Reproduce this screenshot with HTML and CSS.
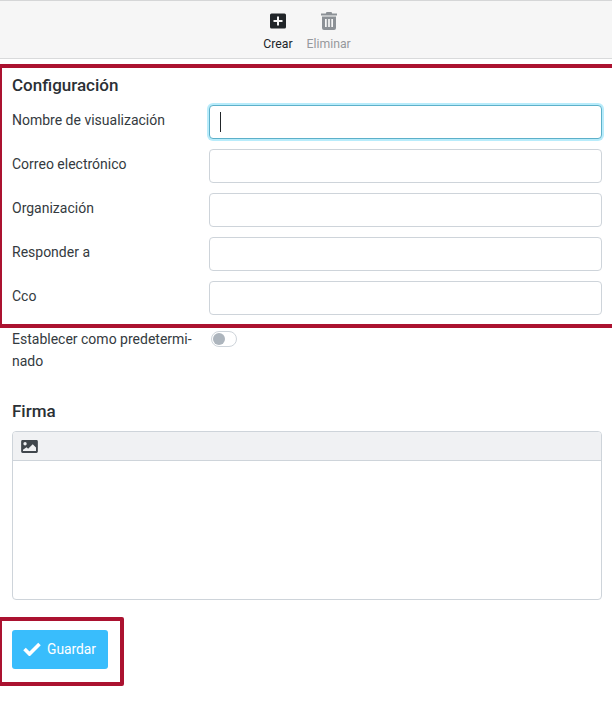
FILE: index.html
```html
<!DOCTYPE html>
<html lang="es">
<head>
    <meta charset="UTF-8">
    <meta name="viewport" content="width=device-width, initial-scale=1.0">
    <title>Configuración</title>
    <link rel="stylesheet" href="styles.css">
</head>
<body>

<div class="toolbar">
    <button class="tool-btn">
        <svg class="tool-icon" viewBox="0 0 16 18"><path fill="#212529" fill-rule="evenodd" d="M1.500 1.500h13A1.500 1.500 0 0 1 16 3v12a1.500 1.500 0 0 1-1.500 1.500h-13A1.500 1.500 0 0 1 0 15V3a1.500 1.500 0 0 1 1.500-1.500zM7 4.500V8H3.500v2H7v3.500h2V10h3.500V8H9V4.500z"/></svg>
        <span>Crear</span>
    </button>
    <button class="tool-btn disabled">
        <svg class="tool-icon" viewBox="0 0 16 18"><path fill="#8c9196" fill-rule="evenodd" d="M5.500 0h5l.7 1.500H16v2H0v-2h4.800zM1 4.500h14V16a2 2 0 0 1-2 2H3a2 2 0 0 1-2-2zM4 7v8h1.700V7zm3.150 0v8h1.700V7zM10.300 7v8H12V7z"/></svg>
        <span>Eliminar</span>
    </button>
</div>

<div class="form">
    <h2 class="title-first">Configuración</h2>

    <div class="row">
        <label>Nombre de visualización</label>
        <div class="fake-input focused"><span class="caret"></span></div>
    </div>
    <div class="row">
        <label>Correo electrónico</label>
        <div class="fake-input"></div>
    </div>
    <div class="row">
        <label>Organización</label>
        <div class="fake-input"></div>
    </div>
    <div class="row">
        <label>Responder a</label>
        <div class="fake-input"></div>
    </div>
    <div class="row">
        <label>Cco</label>
        <div class="fake-input"></div>
    </div>

    <div class="row-toggle">
        <label>Establecer como predetermi-<br>nado</label>
        <div class="switch"><span class="knob"></span></div>
    </div>

    <h2 class="title-firma">Firma</h2>
    <div class="editor">
        <div class="editor-bar">
            <svg class="image-icon" viewBox="0 0 18 14"><path fill="#40464c" fill-rule="evenodd" d="M1.500 0h15A1.500 1.500 0 0 1 18 1.500v11a1.500 1.500 0 0 1-1.500 1.500h-15A1.500 1.500 0 0 1 0 12.500v-11A1.500 1.500 0 0 1 1.500 0zM4.200 2.200a1.800 1.800 0 1 0 0 3.600 1.800 1.800 0 0 0 0-3.600zM2 11.800h14V8l-3.500-3.500L7.500 9.500 5.800 7.800 2 10.500z"/></svg>
        </div>
        <div class="editor-body"></div>
    </div>

    <button class="save-btn">
        <svg class="check-icon" viewBox="0 0 18 14"><path fill="none" stroke="#fff" stroke-width="3.600" d="M1.500 7l5 5L16.500 2"/></svg>
        Guardar
    </button>
</div>

<!-- recuadros rojos de la captura -->
<div class="highlight box-config"></div>
<div class="highlight box-save"></div>

</body>
</html>
```

FILE: styles.css
```css
body {
    font-family: Roboto, "Liberation Sans", sans-serif;
    font-size: 14px;
    color: #343a40;
    background-color: #fff;
    margin: 0;
    padding: 0;
    height: 710px;
    overflow: hidden;
    position: relative;
}

.toolbar {
    display: flex;
    justify-content: center;
    gap: 14px;
    height: 59px;
    box-sizing: border-box;
    background-color: #f6f6f6;
    border-top: 1px solid #d5d6d7;
    border-bottom: 1px solid #d9dadb;
    padding-top: 11px;
    padding-left: 2px;
}

.tool-btn {
    display: flex;
    flex-direction: column;
    align-items: center;
    background: none;
    border: none;
    padding: 0;
    font-family: inherit;
    font-size: 12.25px;
    line-height: 14px;
    color: #212529;
}

.tool-btn.disabled {
    color: #96999d;
}

.tool-icon {
    width: 16px;
    height: 18px;
    margin-bottom: 7px;
}

.form {
    padding: 0 10px 0 12px;
}

h2 {
    font-size: 17px;
    font-weight: 500;
    line-height: 20px;
    color: #2b3035;
    margin: 0;
}

.title-first {
    padding-top: 16px;
    margin-bottom: 10px;
}

.row {
    display: flex;
    height: 34px;
    margin-bottom: 10px;
}

.row label {
    width: 197px;
    line-height: 30px;
}

.fake-input {
    flex: 1;
    box-sizing: border-box;
    background-color: #fff;
    border: 1px solid #ced4da;
    border-radius: 4px;
    display: flex;
    align-items: center;
}

.fake-input.focused {
    border-color: #5db0c9;
    box-shadow: 0 0 0 2px #b8ecfb;
}

.caret {
    width: 1px;
    height: 20px;
    margin-left: 10px;
    background-color: #212529;
}

.row-toggle {
    display: flex;
    margin-top: 13px;
}

.row-toggle label {
    width: 199px;
    line-height: 22px;
}

.switch {
    width: 26px;
    height: 16px;
    box-sizing: border-box;
    margin-top: 3px;
    border: 1px solid #ced4da;
    border-radius: 8px;
    padding: 1px;
}

.knob {
    display: block;
    width: 12px;
    height: 12px;
    border-radius: 50%;
    background-color: #adb5bd;
}

.title-firma {
    margin-top: 29px;
    margin-bottom: 10px;
}

.editor {
    border: 1px solid #ced4da;
    border-radius: 4px;
    height: 169px;
    box-sizing: border-box;
    overflow: hidden;
}

.editor-bar {
    height: 29px;
    box-sizing: border-box;
    background-color: #f0f1f3;
    border-bottom: 1px solid #ced4da;
    padding: 8px 0 0 8px;
}

.image-icon {
    display: block;
    width: 17px;
    height: 13px;
}

.save-btn {
    display: flex;
    align-items: center;
    width: 96px;
    height: 39px;
    margin-top: 30px;
    padding: 0 0 2px 11px;
    background-color: #39bdfc;
    border: none;
    border-radius: 3px;
    color: #fff;
    font-family: inherit;
    font-size: 13.8px;
}

.check-icon {
    width: 18px;
    height: 14px;
    margin-right: 6px;
}

.highlight {
    position: absolute;
    box-sizing: border-box;
    border: 4px solid #ab1230;
    border-radius: 2px;
}

.box-config {
    top: 64px;
    left: -2px;
    width: 620px;
    height: 264px;
}

.box-save {
    top: 617px;
    left: -2px;
    width: 126px;
    height: 69px;
}
```
